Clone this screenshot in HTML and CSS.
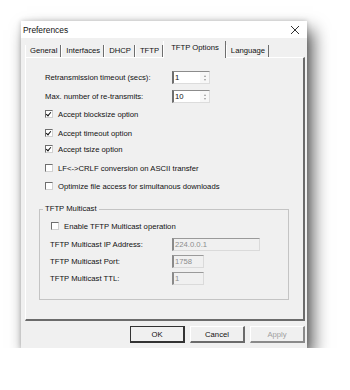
FILE: index.html
```html
<!DOCTYPE html>
<html lang="en">
<head>
  <meta charset="UTF-8" />
  <title>Preferences</title>
  <link rel="stylesheet" href="styles.css">
</head>
<body>
  <div class="dialog">
    <div class="titlebar">
      <span>Preferences</span>
      <svg class="close" width="10" height="10" viewBox="0 0 10 10"><path d="M1 1 L9 9 M9 1 L1 9" stroke="#333" stroke-width="1" fill="none"/></svg>
    </div>
    <div class="dialog-body">
      <div class="tabs">
        <div class="tab">General</div>
        <div class="tab">Interfaces</div>
        <div class="tab">DHCP</div>
        <div class="tab">TFTP</div>
        <div class="tab active">TFTP Options</div>
        <div class="tab">Language</div>
      </div>
      <div class="panel">
        <div class="field-row first">
          <label>Retransmission timeout (secs):</label>
          <div class="spin"><span class="value">1</span><span class="arrows"><i class="up"></i><i class="down"></i></span></div>
        </div>
        <div class="field-row second">
          <label>Max. number of re-transmits:</label>
          <div class="spin"><span class="value">10</span><span class="arrows"><i class="up"></i><i class="down"></i></span></div>
        </div>
        <div class="check c1"><span class="box checked"></span>Accept blocksize option</div>
        <div class="check c2"><span class="box checked"></span>Accept timeout option</div>
        <div class="check c3"><span class="box checked"></span>Accept tsize option</div>
        <div class="check c4"><span class="box"></span>LF&lt;-&gt;CRLF conversion on ASCII transfer</div>
        <div class="check c5"><span class="box"></span>Optimize file access for simultanous downloads</div>

        <fieldset class="group">
          <legend>TFTP Multicast</legend>
          <div class="check enable"><span class="box"></span>Enable TFTP Multicast operation</div>
          <div class="field-row mc ip">
            <label>TFTP Multicast IP Address:</label>
            <div class="text-input disabled wide">224.0.0.1</div>
          </div>
          <div class="field-row mc">
            <label>TFTP Multicast Port:</label>
            <div class="text-input disabled">1758</div>
          </div>
          <div class="field-row mc">
            <label>TFTP Multicast TTL:</label>
            <div class="text-input disabled">1</div>
          </div>
        </fieldset>
      </div>
      <div class="buttons">
        <button class="btn default">OK</button>
        <button class="btn">Cancel</button>
        <button class="btn" disabled>Apply</button>
      </div>
    </div>
  </div>
</body>
</html>
```

FILE: styles.css
```css
body {
  margin: 0;
  padding: 21px 0 0 21px;
  background: #fff;
  font-family: "Liberation Sans", Arial, sans-serif;
  font-size: 7.7px;
  color: #111;
}
.dialog {
  width: 286px;
  height: 327px;
  background: #f0f0f0;
  box-shadow: 0 0 5px rgba(0,0,0,0.2), 6px 9px 16px rgba(0,0,0,0.65);
}
.titlebar {
  height: 17px;
  background: #fff;
  display: flex;
  align-items: center;
  justify-content: space-between;
  padding: 0 7px 0 2px;
  font-size: 8.4px;
  color: #111;
}
.close {
  display: block;
}
.dialog-body {
  padding: 3px 2px 0 4px;
}

/* tabs */
.tabs {
  display: flex;
  align-items: flex-end;
  height: 16px;
}
.tab {
  height: 12px;
  line-height: 12px;
  padding: 0 3px 0 4px;
  border-right: 1px solid #6e6e6e;
  border-left: 1px solid #fff;
  box-sizing: border-box;
}
.tab.active {
  height: 17px;
  line-height: 14px;
  margin-bottom: -1px;
  padding: 0 6px 0 7px;
  background: #f0f0f0;
  position: relative;
}

.panel {
  width: 280px;
  height: 264px;
  box-sizing: border-box;
  border-top: 1px solid #fff;
  border-left: 1px solid #fff;
  border-right: 2px solid #6b6b6b;
  border-bottom: 2px solid #6b6b6b;
  padding: 13px 0 0 13px;
}

.field-row {
  display: flex;
  align-items: center;
  height: 13px;
  padding-left: 6px;
}
.field-row label {
  width: 127px;
}
.field-row.second { margin-top: 6px; }

.spin {
  display: flex;
  width: 38px;
  height: 13px;
  box-sizing: border-box;
  background: #fff;
  border-top: 1px solid #8c8c8c;
  border-left: 2px solid #6e6e6e;
  border-right: 1px solid #dcdcdc;
  border-bottom: 1px solid #dcdcdc;
}
.spin .value {
  flex: 1;
  line-height: 11px;
  padding-left: 1px;
}
.spin .arrows {
  width: 9px;
  display: flex;
  flex-direction: column;
  align-items: center;
  justify-content: center;
  gap: 2px;
  background: #f7f7f7;
}
.arrows i {
  width: 0;
  height: 0;
  border-left: 1.5px solid transparent;
  border-right: 1.5px solid transparent;
}
.arrows .up { border-bottom: 2px solid #999; }
.arrows .down { border-top: 2px solid #999; }

/* checkboxes */
.check {
  display: flex;
  align-items: center;
  height: 12px;
  padding-left: 6px;
}
.check .box {
  width: 8px;
  height: 8px;
  box-sizing: border-box;
  background: #fff;
  border-top: 1px solid #6e6e6e;
  border-left: 1px solid #6e6e6e;
  border-right: 1px solid #d0d0d0;
  border-bottom: 1px solid #d0d0d0;
  margin-right: 5px;
  position: relative;
}
.check .box.checked::after {
  content: "";
  position: absolute;
  left: 1px;
  top: 0;
  width: 2px;
  height: 4px;
  border-right: 1.5px solid #111;
  border-bottom: 1.5px solid #111;
  transform: rotate(40deg);
}
.c1 { margin-top: 5px; }
.c2 { margin-top: 7px; }
.c3 { margin-top: 4px; }
.c4 { margin-top: 7px; }
.c5 { margin-top: 6px; }

/* group box */
.group {
  width: 250px;
  height: 96px;
  box-sizing: border-box;
  margin: 12px 0 0 0;
  padding: 6px 0 0 3px;
  border: 1px solid #c4c4c4;
  min-width: 0;
}
.group legend {
  padding: 0 2px;
  line-height: 10px;
}
.group .enable {
  padding-left: 8px;
}
.group .field-row {
  padding-left: 7px;
  margin-top: 4px;
}
.group .field-row label {
  width: 122px;
}
.group .field-row.ip { margin-top: 6px; }

.text-input {
  width: 32px;
  height: 13px;
  box-sizing: border-box;
  line-height: 11px;
  padding-left: 1px;
  border-top: 1px solid #9a9a9a;
  border-left: 2px solid #8a8a8a;
  border-right: 1px solid #dadada;
  border-bottom: 1px solid #dadada;
}
.text-input.wide { width: 88px; }
.text-input.disabled {
  background: #f0f0f0;
  color: #8d8d8d;
}

/* buttons */
.buttons {
  display: flex;
  justify-content: flex-end;
  gap: 5px;
  margin-top: 5px;
}
.btn {
  width: 55px;
  height: 17px;
  padding: 0;
  font-family: inherit;
  font-size: 7.7px;
  color: #111;
  background: #f0f0f0;
  border-top: 1px solid #fff;
  border-left: 1px solid #fff;
  border-right: 2px solid #6b6b6b;
  border-bottom: 2px solid #6b6b6b;
}
.btn.default {
  border: 1px solid #333;
  border-right-width: 2px;
  border-bottom-width: 2px;
}
.btn:disabled {
  color: #a0a0a0;
  border-right-color: #8a8a8a;
  border-bottom-color: #8a8a8a;
}
```
